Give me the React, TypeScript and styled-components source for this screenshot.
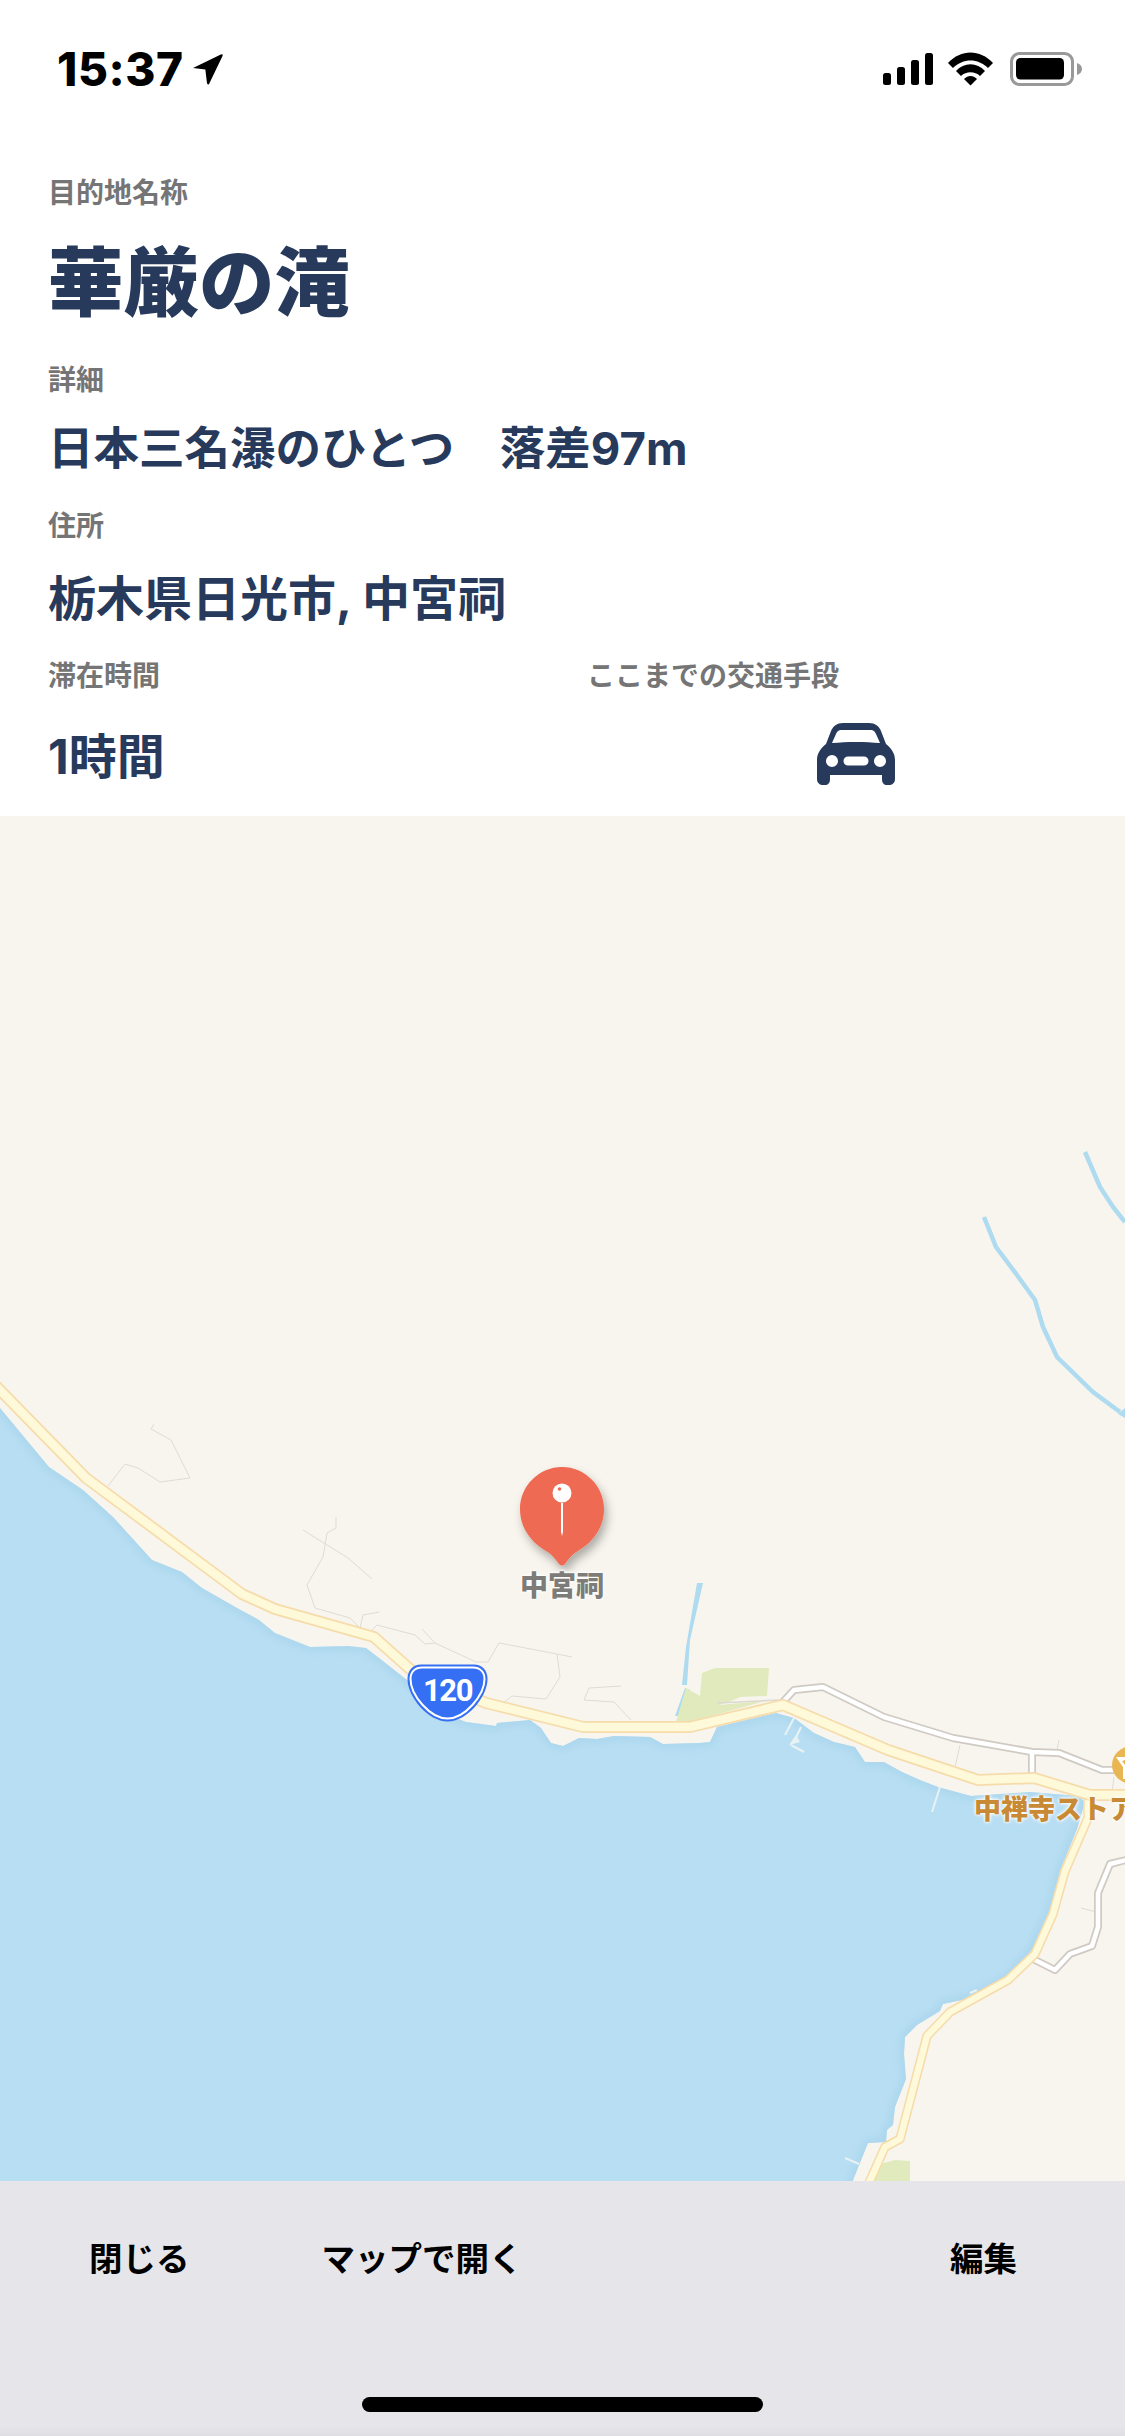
import React from "react";
import styled, { createGlobalStyle } from "styled-components";

const Global = createGlobalStyle`
  html, body { margin: 0; padding: 0; background: #fff; }
  body { font-family: Inter, "Noto Sans CJK JP", sans-serif; }
`;

const Page = styled.div`
  width: 1125px;
  height: 2436px;
  display: flex;
  flex-direction: column;
  overflow: hidden;
  background: #fff;
`;

const StatusBar = styled.div`
  height: 175px;
  flex: none;
  display: flex;
  justify-content: space-between;
  align-items: flex-start;
  padding: 44px 42px 0 57px;
  box-sizing: border-box;
`;

const Clock = styled.div`
  display: flex;
  align-items: center;
  gap: 8px;
  font: 800 46px/50px Inter, sans-serif;
  color: #000;
  letter-spacing: 0.6px;
`;

const StatusIcons = styled.div`
  padding-top: 8px;
  line-height: 0;
`;

const Info = styled.section`
  flex: 1;
  padding: 0 48px;
  box-sizing: border-box;
  color: #273a5c;
`;

const Label = styled.div`
  font: 600 28px/36px Inter, "Noto Sans CJK JP", sans-serif;
  color: #757575;
`;

const Title = styled.h1`
  margin: 22px 0 29px;
  font: 900 75.500px/100px Inter, "Noto Sans CJK JP", sans-serif;
`;

const Value = styled.div<{ $top: number; $bottom: number; $size: number }>`
  margin: ${(p) => p.$top}px 0 ${(p) => p.$bottom}px;
  font: 700 ${(p) => p.$size}px/66px Inter, "Noto Sans CJK JP", sans-serif;
  white-space: pre;
`;

const TwoColumns = styled.div`
  display: grid;
  grid-template-columns: 539px 1fr;
  margin-right: -48px;
`;

const CarCell = styled.div`
  display: flex;
  justify-content: center;
  padding-top: 29px;
`;

const MapArea = styled.div`
  position: relative;
  flex: none;
  height: 1365px;
  overflow: hidden;
  background: #f8f5ee;

  > svg { display: block; }
`;

const MapLabel = styled.span<{ $x: number; $y: number; $color: string; $size: number }>`
  position: absolute;
  left: ${(p) => p.$x}px;
  top: ${(p) => p.$y}px;
  font: 900 ${(p) => p.$size}px/1.2 "Noto Sans CJK JP", sans-serif;
  color: ${(p) => p.$color};
  white-space: nowrap;
  text-shadow: 0 0 3px rgba(255, 255, 255, 0.95), 0 0 3px rgba(255, 255, 255, 0.95), 0 0 5px rgba(255, 255, 255, 0.8);
`;

const Shield = styled.div`
  position: absolute;
  left: 407px;
  top: 848px;
  width: 81px;
  height: 58px;
  line-height: 0;
`;

const ShieldNumber = styled.span`
  position: absolute;
  left: 0;
  right: 0;
  top: 9px;
  text-align: center;
  font: 700 31px/36px Roboto, sans-serif;
  letter-spacing: -1.5px;
  color: #fff;
`;

const Toolbar = styled.footer`
  position: relative;
  flex: none;
  height: 255px;
  box-sizing: border-box;
  background: linear-gradient(#e5e5ea 0, #e5e5ea 245px, #dfdfe3 255px);
  display: flex;
  align-items: flex-start;
  padding: 52px 108px 0 89px;
  gap: 132px;
`;

const ToolButton = styled.div<{ $end?: boolean }>`
  font: 700 33.500px/48px "Noto Sans CJK JP", sans-serif;
  color: #000;
  ${(p) => (p.$end ? "margin-left: auto;" : "")}
`;

const HomeIndicator = styled.div`
  position: absolute;
  left: 362px;
  bottom: 24px;
  width: 401px;
  height: 15px;
  border-radius: 8px;
  background: #000;
`;

const toPts = (a: number[][]) => a.map((p) => p.join(",")).join(" ");

const WATER = [[-20,1385],[0,1408],[49,1467],[83,1490],[113,1517],[152,1560],[182,1572],[202,1588],[237,1608],[259,1620],[275,1633],[310,1647],[348,1646],[366,1648],[379,1658],[407,1680],[435,1710],[466,1722],[496,1726],[497,1723],[530,1720],[541,1728],[551,1743],[563,1746],[579,1738],[597,1739],[614,1736],[650,1737],[663,1744],[699,1743],[710,1742],[717,1727],[776,1713],[794,1718],[814,1733],[834,1742],[855,1747],[865,1762],[884,1762],[902,1772],[920,1780],[938,1787],[971,1796],[1030,1792],[1078,1796],[1085,1802],[1077,1829],[1060,1871],[1050,1911],[1032,1950],[1007,1979],[977,1995],[962,2000],[943,2004],[940,2011],[917,2025],[905,2037],[904,2054],[906,2079],[895,2107],[893,2125],[887,2130],[886,2142],[868,2143],[845,2200],[-20,2200]];

const MAIN_ROAD = [[-6,1384],[86,1478],[242,1594],[275,1609],[374,1637],[411,1670],[486,1703],[583,1727],[690,1727],[783,1705],[888,1750],[978,1780],[1034,1778],[1090,1795],[1130,1795]];
const BRANCH_ROAD = [[1088,1795],[1088,1818],[1065,1871],[1053,1914],[1035,1954],[1008,1980],[950,2012],[927,2036],[900,2139],[885,2147],[868,2185]];

const MINOR_ROADS = [
  [[783,1702],[794,1690],[823,1687],[884,1717],[953,1738],[1032,1752],[1059,1753],[1102,1770],[1130,1770]],
  [[1032,1752],[1032,1775]],
  [[1130,1859],[1110,1864],[1098,1893],[1098,1927],[1092,1946],[1070,1954],[1055,1970],[1033,1959]],
];

const THIN = [
  [[154,1424],[151,1429],[171,1440],[190,1478],[160,1482],[138,1468],[125,1464],[108,1486]],
  [[336,1517],[336,1528],[327,1533],[323,1557],[307,1585],[315,1608],[350,1618],[360,1628],[363,1615],[379,1612]],
  [[303,1530],[348,1558],[372,1579]],
  [[371,1631],[377,1625],[415,1635],[425,1644],[435,1643],[476,1662],[488,1662],[499,1643],[557,1654],[572,1657]],
  [[557,1654],[560,1677],[546,1699],[512,1696],[503,1703]],
  [[422,1629],[435,1643]],
  [[621,1686],[589,1688],[584,1700],[614,1702],[631,1720]],
  [[960,1745],[955,1767]],
  [[1059,1740],[1057,1750]],
  [[1114,1777],[1112,1792]],
  [[1081,1908],[1100,1913]],
];

const JETTIES = [
  [[794,1718],[785,1735]],
  [[801,1727],[794,1742]],
  [[791,1745],[804,1752]],
  [[940,1787],[932,1812]],
  [[845,2158],[859,2164]],
  [[970,1993],[977,1990]],
];

const MapBase = () => (
  <svg width="1125" height="1365" viewBox="0 816 1125 1365" fill="none">
    <defs>
      <clipPath id="waterClip"><polygon points={toPts(WATER)} /></clipPath>
      <filter id="soft" x="-5%" y="-5%" width="110%" height="110%"><feGaussianBlur stdDeviation="4" /></filter>
      <filter id="pinShadow" x="-50%" y="-50%" width="200%" height="200%"><feDropShadow dx="3" dy="6" stdDeviation="5" floodColor="#000" floodOpacity="0.3" /></filter>
    </defs>
    <polygon points={toPts(WATER)} fill="#b8def3" />
    <g clipPath="url(#waterClip)">
      <polygon points={toPts(WATER)} fill="none" stroke="#a9d5ec" strokeWidth="8" filter="url(#soft)" />
    </g>

    <path d="M984 1217 L996 1247 L1017 1275 L1035 1300 L1043 1327 L1057 1357 L1093 1392 L1120 1412" stroke="#aedbf0" strokeWidth="4.5" />
    <polygon points="1118,1414 1125,1408 1125,1418" fill="#aedbf0" />
    <path d="M1085 1152 L1100 1187 L1113 1207 L1125 1222" stroke="#aedbf0" strokeWidth="4.5" />
    <polygon points="697,1583 703,1583 690,1640 687,1685 682,1685 686,1647" fill="#aedbf0" />
    <polygon points="685,1688 675,1716 680,1716 690,1690" fill="#aedbf0" />

    <polygon points="702,1673 715,1668 769,1668 767,1696 740,1697 729,1702 719,1705 765,1701 690,1722 676,1722 686,1688 700,1696" fill="#e0eabd" />
    <polygon points="880,2164 895,2160 910,2161 910,2185 872,2185" fill="#e0eabd" />

    {THIN.map((l, i) => (
      <polyline key={i} points={toPts(l)} stroke="#dfdbd5" strokeWidth="1" strokeLinejoin="round" />
    ))}
    <polyline points="717,1703 780,1700" stroke="#dcd8d2" strokeWidth="1.5" />

    {JETTIES.map((l, i) => (
      <polyline key={i} points={toPts(l)} stroke="#e9f2f3" strokeWidth="2" />
    ))}
    <polygon points="796,1735 789,1745 800,1742" fill="#e9f2f3" />

    {MINOR_ROADS.map((l, i) => (
      <polyline key={i} points={toPts(l)} stroke="#cfcac3" strokeWidth="8" strokeLinejoin="round" />
    ))}
    {MINOR_ROADS.map((l, i) => (
      <polyline key={i} points={toPts(l)} stroke="#ffffff" strokeWidth="4.5" strokeLinejoin="round" />
    ))}

    <polyline points={toPts(BRANCH_ROAD)} stroke="#f6dcab" strokeWidth="9.5" strokeLinejoin="round" />
    <polyline points={toPts(BRANCH_ROAD)} stroke="#fdf9d9" strokeWidth="6.5" strokeLinejoin="round" />
    <polyline points={toPts(MAIN_ROAD)} stroke="#f6dcab" strokeWidth="12" strokeLinejoin="round" />
    <polyline points={toPts(MAIN_ROAD)} stroke="#fdf9d9" strokeWidth="8.5" strokeLinejoin="round" />

    <circle cx="1130.5" cy="1765" r="18.5" fill="#e9b654" />
    <path d="M1116 1757 L1125 1757 L1125 1760 L1122 1761 L1125 1765 L1125 1779 L1123 1779 L1123 1767 Z" fill="#fff" />

    <path
      d="M562 1467 C585 1467 604 1486 604 1509 C604 1530 590 1544 578 1551 C572 1554 568 1560 565 1564 Q562 1567 559 1564 C556 1560 552 1554 546 1551 C534 1544 520 1530 520 1509 C520 1486 539 1467 562 1467 Z"
      fill="#ee6a53"
      filter="url(#pinShadow)"
    />
    <circle cx="562" cy="1493" r="9.5" fill="#fff" />
    <circle cx="559.5" cy="1489" r="1.8" fill="#ee6a53" />
    <polygon points="561,1503 563,1503 563,1532 562,1536 561,1532" fill="#fff" />
  </svg>
);

const ShieldSign = () => (
  <svg width="81" height="58" viewBox="0 0 81 58">
    <path d="M14 0.5 H67 C75 0.5 80.5 6 80.5 15 C80.5 33 60 57.500 40.5 57.500 C21 57.500 0.5 33 0.5 15 C0.5 6 6 0.5 14 0.5 Z" fill="#3570f4" />
    <path d="M15 3.500 H66 C73 3.500 77.500 8 77.500 15 C77.500 31 58 54.500 40.500 54.500 C23 54.500 3.500 31 3.500 15 C3.500 8 8 3.500 15 3.500 Z" fill="none" stroke="#fff" strokeWidth="2" />
  </svg>
);

const App = () => (
  <Page>
    <Global />
    <StatusBar>
      <Clock>
        15:37
        <svg width="32" height="32" viewBox="0 0 30 30">
          <path d="M1 14 L27 1.500 Q29.500 0.500 28.500 3 L16 29 Q14.500 30.500 14 28 L12.500 15.500 Z" fill="#000" />
        </svg>
      </Clock>
      <StatusIcons>
        <svg width="200" height="34" viewBox="883 52 200 34">
          <rect x="883" y="73" width="8" height="12" rx="2.500" fill="#000" />
          <rect x="897" y="67" width="8" height="18" rx="2.500" fill="#000" />
          <rect x="911" y="60" width="8" height="25" rx="2.500" fill="#000" />
          <rect x="925" y="53" width="8" height="32" rx="2.500" fill="#000" />
          <path d="M948 63 C961 49 980 49 993 63 L988 68 C978 58 963 58 953 68 Z" fill="#000" />
          <path d="M956 71 C964 62 977 62 985 71 L980 76 C975 71 966 71 961 76 Z" fill="#000" />
          <path d="M964 79 C968 75 973 75 977 79 L970.500 85.500 Z" fill="#000" />
          <rect x="1011.500" y="53.500" width="61" height="31" rx="8" fill="none" stroke="#999" strokeWidth="3" />
          <rect x="1016" y="58" width="48" height="21.500" rx="4.500" fill="#000" />
          <path d="M1077 63 C1080 64 1082 66 1082 69 C1082 72 1080 74 1077 75 Z" fill="#999" />
        </svg>
      </StatusIcons>
    </StatusBar>

    <Info>
      <Label>目的地名称</Label>
      <Title>華厳の滝</Title>
      <Label>詳細</Label>
      <Value $top={18} $bottom={26} $size={45.5}>日本三名瀑のひとつ　落差97m</Value>
      <Label>住所</Label>
      <Value $top={22} $bottom={26} $size={48}>栃木県日光市, 中宮祠</Value>
      <TwoColumns>
        <div>
          <Label>滞在時間</Label>
          <Value $top={30} $bottom={0} $size={48}>1時間</Value>
        </div>
        <div>
          <Label>ここまでの交通手段</Label>
          <CarCell>
            <svg width="78" height="62" viewBox="0 0 78 62">
              <path
                fillRule="evenodd"
                fill="#273a5c"
                d="M26 0 H52 C58 0 62 3 64 8 L69 21 C74 25 78 30 78 37 V56 C78 60 75 62 72 62 H70 C67 62 65 60 65 56 V52 H13 V56 C13 60 11 62 8 62 H6 C3 62 0 60 0 56 V37 C0 30 4 25 9 21 L14 8 C16 3 20 0 26 0 Z M25 7 C21 7 20 9 19 11 L15 20 C30 18.500 48 18.500 63 20 L59 11 C58 9 57 7 53 7 Z M15 32 A6 6 0 1 0 15 44 A6 6 0 1 0 15 32 Z M63 32 A6 6 0 1 0 63 44 A6 6 0 1 0 63 32 Z M31 33.500 A4.500 4.500 0 0 0 31 42.500 H47 A4.500 4.500 0 0 0 47 33.500 Z"
              />
            </svg>
          </CarCell>
        </div>
      </TwoColumns>
    </Info>

    <MapArea>
      <MapBase />
      <MapLabel $x={520} $y={752} $color="#7d7c78" $size={28}>中宮祠</MapLabel>
      <MapLabel $x={974} $y={976} $color="#c98a35" $size={27}>中禅寺ストア</MapLabel>
      <Shield>
        <ShieldSign />
        <ShieldNumber>120</ShieldNumber>
      </Shield>
    </MapArea>

    <Toolbar>
      <ToolButton>閉じる</ToolButton>
      <ToolButton>マップで開く</ToolButton>
      <ToolButton $end>編集</ToolButton>
      <HomeIndicator />
    </Toolbar>
  </Page>
);

export default App;
